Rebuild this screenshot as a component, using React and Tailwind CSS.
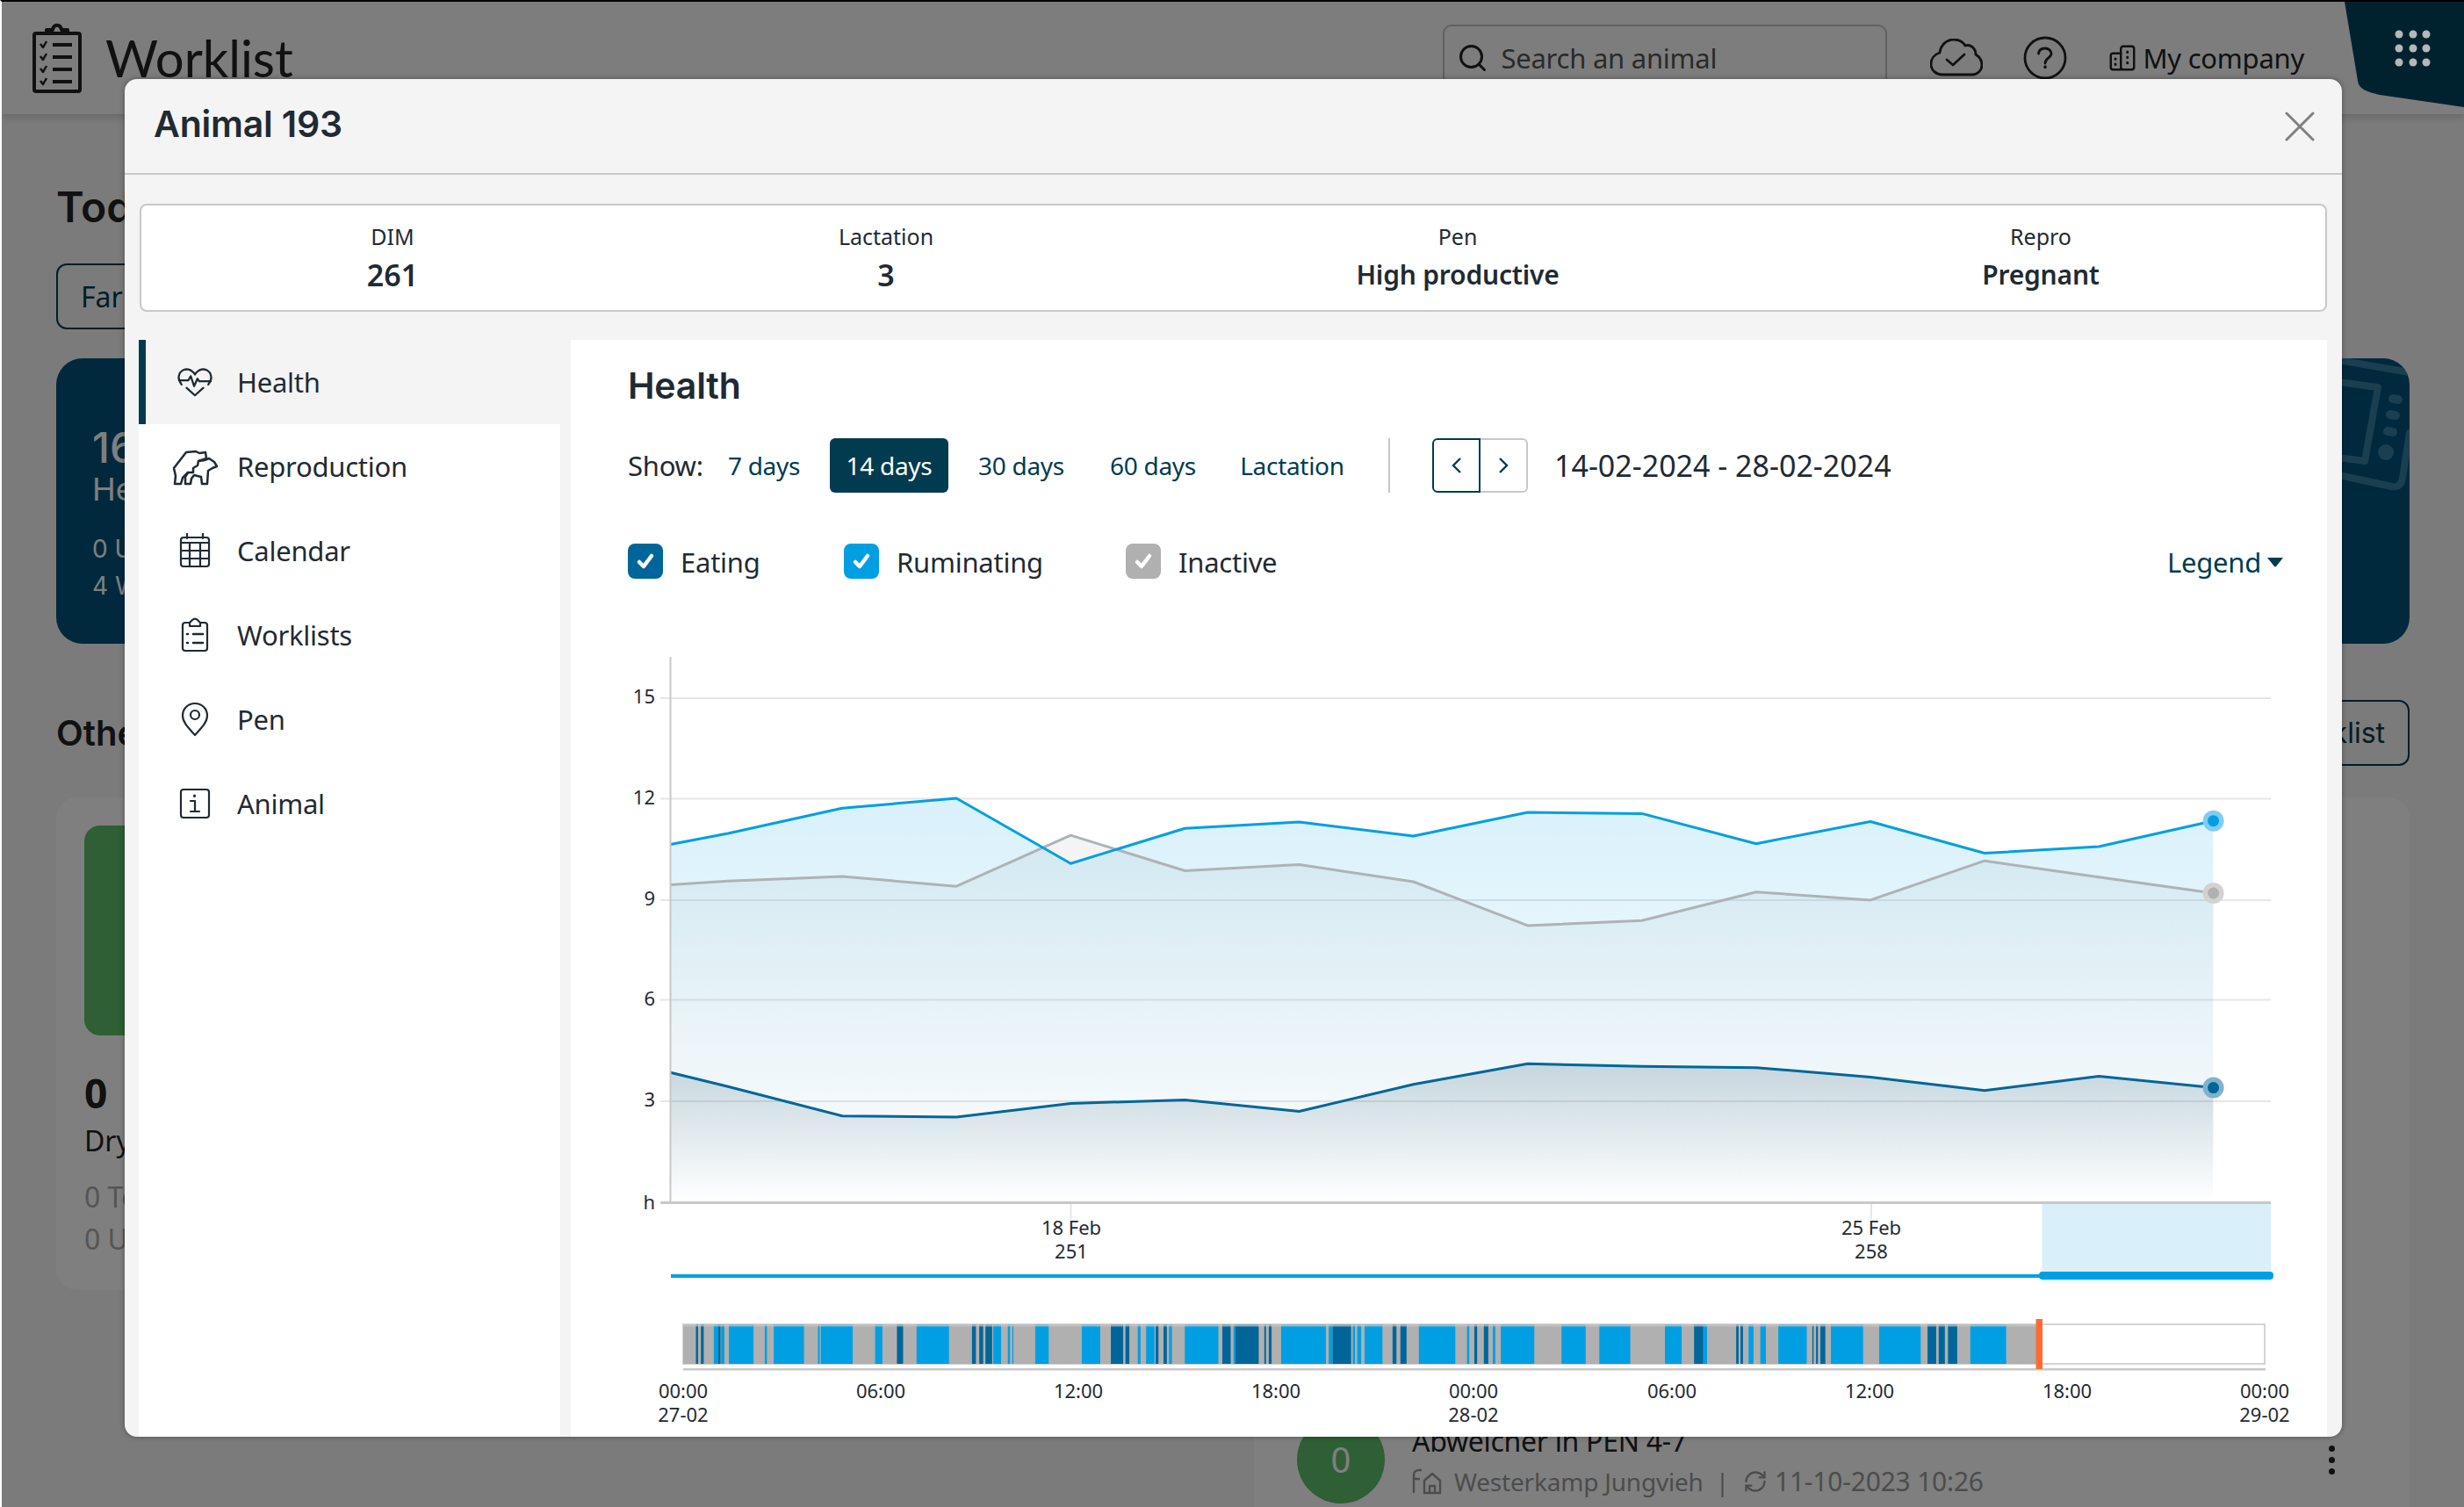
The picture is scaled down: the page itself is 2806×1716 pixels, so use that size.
import React from 'react';
import { Search, RefreshCw } from 'lucide-react';

const startX = 763.5;
const firstX = 829;
const stepX = 130.1;
const baseY = 1369;

const series = [
    {
        id: 'inactive',
        color: '#adb3b6',
        halo: '#d2d2d2',
        dot: '#b0b0b0',
        ys: [1007.5, 1003.2, 998, 1009.2, 951.1, 991.5, 984.5, 1004, 1053.9, 1048.3, 1015.7, 1024.9, 980.2, 998.8, 1017],
    },
    {
        id: 'ruminating',
        color: '#009fe3',
        halo: '#7fcdf1',
        dot: '#009fe3',
        ys: [961.5, 949, 920.3, 909, 983.2, 943.3, 936, 952, 925, 926.4, 960.7, 935.5, 971.5, 964, 934.7],
    },
    {
        id: 'eating',
        color: '#006699',
        halo: '#7fb2cc',
        dot: '#006699',
        ys: [1221.3, 1237.3, 1270.7, 1272, 1256.4, 1252.5, 1265.5, 1234.7, 1211.3, 1214.3, 1215.7, 1226.5, 1241.7, 1225.6, 1238.6],
    },
];

const pointsOf = (ys) =>
    ys.map((y, i) => [i === 0 ? startX : firstX + stepX * (i - 1), y]);

const linePath = (ys) =>
    pointsOf(ys)
        .map(([x, y], i) => `${i === 0 ? 'M' : 'L'}${x} ${y}`)
        .join(' ');

const areaPath = (ys) => {
    const pts = pointsOf(ys);
    return `${linePath(ys)} L${pts[pts.length - 1][0]} ${baseY} L${startX} ${baseY} Z`;
};

const gridLines = [
    { y: 795, label: '15' },
    { y: 909.5, label: '12' },
    { y: 1025, label: '9' },
    { y: 1138.5, label: '6' },
    { y: 1254, label: '3' },
];

const timeLabels = [
    { x: 778, top: '00:00', bottom: '27-02' },
    { x: 1003, top: '06:00' },
    { x: 1228, top: '12:00' },
    { x: 1453, top: '18:00' },
    { x: 1678, top: '00:00', bottom: '28-02' },
    { x: 1904, top: '06:00' },
    { x: 2129, top: '12:00' },
    { x: 2354, top: '18:00' },
    { x: 2579, top: '00:00', bottom: '29-02' },
];

// activity blocks, measured left part / right part of the bar
const leftBlocks = [
    [145, 149, 'd'], [154, 159, 'd'], [177, 185, 'l'], [185, 189, 'd'], [190, 196, 'l'], [204, 248, 'l'],
    [268, 272, 'l'], [284, 338, 'l'], [363, 366, 'l'], [368, 425, 'l'], [465, 478, 'l'], [504, 515, 'd'],
    [539, 597, 'l'], [638, 645, 'd'], [651, 658, 'd'], [662, 674, 'd'], [676, 690, 'l'], [702, 706, 'l'],
    [710, 712, 'l'], [751, 775, 'l'], [834, 867, 'l'], [886, 908, 'd'], [912, 919, 'd'], [934, 939, 'l'],
    [949, 964, 'l'], [966, 971, 'd'], [980, 986, 'd'], [990, 995, 'l'], [1018, 1078, 'l'], [1085, 1100, 'd'],
    [1105, 1108, 'l'], [1108, 1150, 'd'], [1160, 1163, 'd'], [1168, 1173, 'd'], [1190, 1270, 'l'], [1275, 1282, 'l'],
    [1282, 1315, 'd'], [1318, 1322, 'l'], [1326, 1333, 'l'], [1339, 1371, 'l'], [1389, 1396, 'd'], [1403, 1414, 'd'],
    [1436, 1501, 'l'], [1522, 1526, 'l'], [1535, 1540, 'd'], [1552, 1560, 'd'],
];
const rightBlocks = [
    [0, 4, 'l'], [13, 67, 'l'], [111, 150, 'l'], [172, 222, 'l'], [278, 305, 'l'], [325, 340, 'd'], [340, 346, 'l'],
    [393, 397, 'd'], [400, 404, 'd'], [413, 421, 'l'], [432, 441, 'l'], [461, 507, 'l'], [516, 518, 'd'],
    [522, 525, 'd'], [529, 537, 'd'], [546, 598, 'l'], [624, 691, 'l'], [702, 716, 'd'], [720, 730, 'd'],
    [735, 750, 'd'], [771, 829, 'l'],
];
const blocks = [
    ...leftBlocks.map(([a, b, t]) => [700 + a / 1.568, 700 + b / 1.568, t]),
    ...rightBlocks.map(([a, b, t]) => [1700 + a / 1.418, 1700 + b / 1.418, t]),
];

const HealthIcon = () => (
    <svg width="42" height="36" viewBox="0 0 42 36" fill="none" stroke="#1f2a33" strokeWidth="2.4" strokeLinejoin="round" strokeLinecap="round">
        <path d="M5 21C2 17 1 13 2 10C3 5 8 2 13 3C17 4 19 6 21 9C23 6 25 4 29 3C34 2 39 5 40 10C41 13 40 17 37 21" />
        <path d="M2 16H13L16 11L20 23L24 14L26 17H40" />
        <path d="M11 25L21 34L31 25" />
    </svg>
);

const ReproIcon = () => (
    <svg className="shrink-0" width="70" height="60" viewBox="-3 0 70 60" fill="none" stroke="#1f2a33" strokeWidth="2.5" strokeLinejoin="round" strokeLinecap="round">
        <path d="M9 50H16L18 43L24 37H30V32L35 29L36 24L45 21L44 14L37 15L33 13L22 14L8 32L10 41Z" />
        <path d="M36 24L43 23L48 21L54 25L57 30L52 32L47 35L46 50H40L39 42L31 40L28 44L27 50H21V42L24 37" />
    </svg>
);

const CalendarIcon = () => (
    <svg width="36" height="40" viewBox="0 0 36 40" fill="none" stroke="#1f2a33" strokeWidth="2.2" strokeLinejoin="round" strokeLinecap="round">
        <rect x="2" y="5" width="32" height="33" rx="3" />
        <path d="M9 1V6M27 1V6M2 11H34M2 20H34M2 29H34M12 11V38M24 11V38" />
    </svg>
);

const ListIcon = () => (
    <svg width="32" height="40" viewBox="0 0 32 40" fill="none" stroke="#1f2a33" strokeWidth="2.2" strokeLinejoin="round" strokeLinecap="round">
        <path d="M10 6H5C3 6 2 7 2 9V35C2 37 3 38 5 38H27C29 38 30 37 30 35V9C30 7 29 6 27 6H22L19 3C17 1 15 1 13 3L10 6V10H22V6" />
        <path d="M7 19H8M14 19H25M7 29H8M14 29H25" strokeWidth="2.6" />
    </svg>
);

const PinIcon = () => (
    <svg width="32" height="40" viewBox="0 0 32 40" fill="none" stroke="#1f2a33" strokeWidth="2.2" strokeLinejoin="round">
        <path d="M16 38C10 31 2 24 2 16C2 8 8 2 16 2C24 2 30 8 30 16C30 24 22 31 16 38Z" />
        <circle cx="16" cy="15" r="5" />
    </svg>
);

const InfoIcon = () => (
    <svg width="36" height="36" viewBox="0 0 36 36" fill="none" stroke="#1f2a33" strokeWidth="2.2" strokeLinejoin="round" strokeLinecap="round">
        <rect x="2" y="2" width="32" height="32" rx="3" />
        <path d="M13 15H18V27M13 27H23" />
        <path d="M17.5 9V9.5" strokeWidth="3" />
    </svg>
);

const CheckBox = ({ color, label, className }) => (
    <div className={`flex items-center gap-[20px] ${className}`}>
        <div className={`flex h-[40px] w-[40px] items-center justify-center rounded-[8px] ${color}`}>
            <svg width="24" height="24" viewBox="0 0 24 24" fill="none" stroke="white" strokeWidth="4.5" strokeLinecap="round" strokeLinejoin="round">
                <path d="M5 13L10 18L19 6" />
            </svg>
        </div>
        <span className="pt-[2px] text-[31px] tracking-[-0.25px] text-[#1f2a33]">{label}</span>
    </div>
);

const menu = [
    { label: 'Health', icon: <HealthIcon />, active: true },
    { label: 'Reproduction', icon: <ReproIcon /> },
    { label: 'Calendar', icon: <CalendarIcon /> },
    { label: 'Worklists', icon: <ListIcon /> },
    { label: 'Pen', icon: <PinIcon /> },
    { label: 'Animal', icon: <InfoIcon /> },
];

const infoCols = [
    { label: 'DIM', value: '261', size: 'text-[34px]' },
    { label: 'Lactation', value: '3', size: 'text-[34px]' },
    { label: 'Pen', value: 'High productive', size: 'text-[30px] tracking-[-0.2px]' },
    { label: 'Repro', value: 'Pregnant', size: 'text-[30px] tracking-[-0.2px]' },
];

const ranges = [
    { label: '7 days', width: 'w-[118px]' },
    { label: '14 days', width: 'w-[135px]' },
    { label: '30 days', width: 'w-[134px]' },
    { label: '60 days', width: 'w-[134px]' },
    { label: 'Lactation', width: 'w-[151px]' },
];

const Chart = () => (
    <svg width="2000" height="896" viewBox="650 740 2000 896" className="block">
        <defs>
            <linearGradient id="fill-inactive" x1="0" y1="0" x2="0" y2="1">
                <stop offset="0" stopColor="#b0b0b0" stopOpacity="0.14" />
                <stop offset="1" stopColor="#b0b0b0" stopOpacity="0" />
            </linearGradient>
            <linearGradient id="fill-ruminating" x1="0" y1="0" x2="0" y2="1">
                <stop offset="0" stopColor="#009fe3" stopOpacity="0.15" />
                <stop offset="1" stopColor="#009fe3" stopOpacity="0" />
            </linearGradient>
            <linearGradient id="fill-eating" x1="0" y1="0" x2="0" y2="1">
                <stop offset="0" stopColor="#003b50" stopOpacity="0.17" />
                <stop offset="1" stopColor="#003b50" stopOpacity="0" />
            </linearGradient>
        </defs>

        {gridLines.map((g) => (
            <g key={g.label}>
                <line x1="752" x2="2586" y1={g.y} y2={g.y} stroke="#e6e6e6" strokeWidth="2" />
                <text x="746" y={g.y + 6} textAnchor="end" fontSize="22" fill="#1f2a33">{g.label}</text>
            </g>
        ))}
        <text x="746" y="1377" textAnchor="end" fontSize="22" fill="#1f2a33">h</text>

        {series.map((s) => (
            <path key={s.id} d={areaPath(s.ys)} fill={`url(#fill-${s.id})`} />
        ))}
        {series.map((s) => (
            <path key={s.id} d={linePath(s.ys)} fill="none" stroke={s.color} strokeWidth="3" strokeLinejoin="round" />
        ))}
        {series.map((s) => (
            <g key={s.id}>
                <circle cx="2520.6" cy={s.ys[14]} r="12" fill={s.halo} />
                <circle cx="2520.6" cy={s.ys[14]} r="6.5" fill={s.dot} />
            </g>
        ))}

        <line x1="763.5" x2="763.5" y1="748" y2="1370" stroke="#c8c8c8" strokeWidth="2" />
        <line x1="752" x2="2586" y1="1369.5" y2="1369.5" stroke="#c8c8c8" strokeWidth="3" />

        <line x1="1219.5" x2="1219.5" y1="1371" y2="1388" stroke="#e6e6e6" strokeWidth="2" />
        <line x1="2131" x2="2131" y1="1371" y2="1388" stroke="#e6e6e6" strokeWidth="2" />
        <text x="1220" y="1406" textAnchor="middle" fontSize="22" fill="#1f2a33">18 Feb</text>
        <text x="1220" y="1433" textAnchor="middle" fontSize="22" fill="#1f2a33">251</text>
        <text x="2131" y="1406" textAnchor="middle" fontSize="22" fill="#1f2a33">25 Feb</text>
        <text x="2131" y="1433" textAnchor="middle" fontSize="22" fill="#1f2a33">258</text>

        {/* navigator */}
        <rect x="2325.5" y="1371" width="260.5" height="78" fill="#d9eff9" />
        <rect x="764" y="1451" width="1562" height="4" fill="#009fe3" />
        <rect x="2325.5" y="1447" width="260.5" height="12" fill="#d9eff9" />
        <rect x="2322" y="1448" width="267" height="9" rx="4" fill="#009fe3" />

        {/* activity bar */}
        <rect x="778" y="1508" width="1801" height="45" fill="#ffffff" stroke="#d4d4d4" strokeWidth="2" />
        <rect x="778" y="1508" width="1541" height="45" fill="#b0b0b0" />
        {blocks.map(([a, b, t], i) => (
            <rect key={i} x={a} y="1508" width={b - a} height="45" fill={t === 'l' ? '#009fe3' : '#006699'} />
        ))}
        <rect x="778" y="1508" width="1541" height="2.5" fill="#c8c8c8" opacity="0.7" />
        <rect x="778" y="1558" width="1802" height="2.5" fill="#c8c8c8" />
        <rect x="2318.5" y="1502" width="7.5" height="57" fill="#ff6b35" />

        {timeLabels.map((t) => (
            <g key={t.x}>
                <text x={t.x} y="1592" textAnchor="middle" fontSize="22" fill="#1f2a33">{t.top}</text>
                {t.bottom && <text x={t.x} y="1619" textAnchor="middle" fontSize="22" fill="#1f2a33">{t.bottom}</text>}
            </g>
        ))}
    </svg>
);

const AnimalModal = () => (
    <div className="absolute left-[140px] top-[88px] z-10 flex h-[1546px] w-[2525px] flex-col overflow-hidden rounded-[14px] bg-[#f4f4f4] shadow-[0_0_6px_rgba(0,0,0,0.35)]">
        <div className="flex h-[109px] shrink-0 items-center justify-between border-b-2 border-[#c8c8c8] pl-[33px] pr-[31px]">
            <h1 className="-mt-[4px] font-['Inter',sans-serif] text-[41px] font-semibold tracking-[-0.2px] text-[#1f2a33]">Animal 193</h1>
            <svg width="34" height="34" viewBox="0 0 34 34" stroke="#808080" strokeWidth="3" strokeLinecap="round">
                <path d="M2 2L32 32M32 2L2 32" />
            </svg>
        </div>

        <div className="mx-[17px] mt-[33px] grid h-[123px] shrink-0 grid-cols-[572px_552px_750px_578px] rounded-[8px] border-2 border-[#c8c8c8] bg-white">
            {infoCols.map((col) => (
                <div key={col.label} className="flex flex-col items-center pt-[18px]">
                    <span className="text-[25px] leading-[34px] text-[#1f2a33]">{col.label}</span>
                    <span className={`mt-[6px] font-semibold leading-[42px] text-[#1f2a33] ${col.size}`}>{col.value}</span>
                </div>
            ))}
        </div>

        <div className="mt-[32px] flex min-h-0 flex-1">
            <nav className="ml-[16px] w-[480px] shrink-0 bg-white">
                {menu.map((item) => (
                    <div
                        key={item.label}
                        className={`flex h-[96px] items-center gap-[28px] ${item.active ? 'border-l-8 border-[#003b50] bg-[#f4f4f4] pl-[36px]' : 'pl-[44px]'}`}
                    >
                        <div className="flex w-[40px] justify-center">{item.icon}</div>
                        <span className="text-[31px] tracking-[-0.25px] text-[#1f2a33]">{item.label}</span>
                    </div>
                ))}
            </nav>

            <section className="ml-[12px] w-[2000px] shrink-0 bg-white">
                <div className="pl-[65px] pr-[49px] pt-[30px]">
                    <h2 className="font-['Inter',sans-serif] text-[41px] font-semibold leading-[44px] tracking-[-0.2px] text-[#1f2a33]">Health</h2>

                    <div className="mt-[38px] flex h-[62px] items-center">
                        <span className="w-[96px] text-[31px] tracking-[-0.25px] text-[#1f2a33]">Show:</span>
                        <div className="flex gap-[16px]">
                            {ranges.map((r) => (
                                <button
                                    key={r.label}
                                    className={`h-[62px] rounded-[6px] text-[28px] tracking-[-0.3px] ${r.width} ${r.label === '14 days' ? 'bg-[#003b50] text-white' : 'text-[#003b50]'}`}
                                >
                                    {r.label}
                                </button>
                            ))}
                        </div>
                        <div className="ml-[34px] h-[62px] w-[2px] bg-[#c8c8c8]" />
                        <div className="ml-[48px] flex h-[62px]">
                            <div className="flex w-[55px] items-center justify-center rounded-l-[6px] border-2 border-[#003b50]">
                                <svg width="20" height="24" viewBox="0 0 20 24" fill="none" stroke="#003b50" strokeWidth="2.4"><path d="M14 4L6 12L14 20" /></svg>
                            </div>
                            <div className="flex w-[54px] items-center justify-center rounded-r-[6px] border-2 border-l-0 border-[#c8c8c8]">
                                <svg width="20" height="24" viewBox="0 0 20 24" fill="none" stroke="#003b50" strokeWidth="2.4"><path d="M6 4L14 12L6 20" /></svg>
                            </div>
                        </div>
                        <span className="ml-[30px] text-[34px] text-[#1f2a33]">14-02-2024 - 28-02-2024</span>
                    </div>

                    <div className="mt-[58px] flex h-[40px] items-center">
                        <CheckBox color="bg-[#006699]" label="Eating" className="w-[246px]" />
                        <CheckBox color="bg-[#009fe3]" label="Ruminating" className="w-[321px]" />
                        <CheckBox color="bg-[#b0b0b0]" label="Inactive" />
                        <div className="ml-auto flex items-center gap-[6px] pt-[2px] text-[31px] tracking-[-0.25px] text-[#003b50]">
                            Legend
                            <svg width="20" height="12" viewBox="0 0 20 12" fill="#003b50"><path d="M1 1H19L11 11C10.5 11.5 9.5 11.5 9 11Z" /></svg>
                        </div>
                    </div>
                </div>
                <div className="mt-[81px]">
                    <Chart />
                </div>
            </section>
        </div>
    </div>
);

const Header = () => (
    <header className="flex h-[128px] items-center bg-[#fafafa] pl-[34px] pr-[182px] shadow-[0_2px_10px_rgba(0,0,0,0.2)]">
        <svg width="58" height="80" viewBox="0 0 58 80" fill="none" stroke="#222" strokeWidth="4" strokeLinejoin="round">
            <rect x="3" y="12" width="52" height="66" rx="2" />
            <path d="M17 12V8H24C25 1 33 1 34 8H41V12Z" />
            <path d="M10 24L13 28L17 21M10 38L13 42L17 35M10 52L13 56L17 49M10 66L13 70L17 63" strokeWidth="2.5" />
            <path d="M24 25H46M24 39H46M24 53H46M24 67H46" strokeWidth="4" />
        </svg>
        <span className="ml-[26px] font-['Lato',sans-serif] text-[58px] leading-none text-[#222]">Worklist</span>

        <div className="ml-auto flex h-[76px] w-[506px] items-center rounded-[10px] border-2 border-[#c0c0c0] pl-[14px] text-[#555]">
            <Search size={36} color="#222" strokeWidth={2} />
            <span className="ml-[14px] text-[31px] tracking-[-0.25px]">Search an animal</span>
        </div>
        <svg className="ml-[49px]" width="60" height="44" viewBox="0 0 60 44" fill="none" stroke="#222" strokeWidth="2.8" strokeLinejoin="round" strokeLinecap="round">
            <path d="M14 41H48C54 41 59 36 59 30C59 24 55 20 52 18C52 11 46 6 40 8C37 3 32 1 27 1C19 1 12 7 11 16C5 18 1 23 1 29C1 36 7 41 14 41Z" />
            <path d="M19 24L26 30L39 18" />
        </svg>
        <svg className="ml-[46px]" width="50" height="50" viewBox="0 0 50 50" fill="none" stroke="#222" strokeWidth="2.8" strokeLinecap="round">
            <circle cx="25" cy="25" r="23" />
            <path d="M17.5 20C18 16 21 14 25 14C29 14 32 17 32 20C32 25 25 25 25 31" />
            <path d="M25 35V35.5" strokeWidth="3.5" />
        </svg>
        <div className="ml-[48px] flex items-center gap-[8px] text-[31px] tracking-[-0.25px] text-[#222]">
            <svg width="30" height="30" viewBox="0 0 34 34" fill="none" stroke="#222" strokeWidth="2.8" strokeLinejoin="round" strokeLinecap="round">
                <rect x="15" y="2" width="17" height="30" rx="3" />
                <path d="M15 11H5C3 11 2 12 2 14V29C2 31 3 32 5 32H15" />
                <path d="M23.5 9V9.5M23.5 16V16.5M23.5 23V23.5M8 18V18.5M8 25V25.5" strokeWidth="3.4" />
            </svg>
            My company
        </div>
    </header>
);

const AppBadge = () => (
    <div className="absolute right-0 top-0 z-20">
        <svg width="136" height="120" viewBox="0 0 136 120" fill="#00222f">
            <path d="M0 0H136V120L40 106C28 103 16 100 15 90Z" />
            {[37, 53, 69].map((y) =>
                [62, 78, 93].map((x) => <circle key={`${x}-${y}`} cx={x} cy={y} r="4.5" fill="#b4b8ba" />)
            )}
        </svg>
    </div>
);

const App = () => {
    return (
        <div className="relative h-[1716px] w-[2806px] overflow-hidden border-l-2 border-t-2 border-l-white border-t-black bg-[#f6f6f6] font-['Noto_Sans',sans-serif]">
            <Header />

            <main className="pl-[62px]">
                <h2 className="mt-[82px] font-['Inter',sans-serif] text-[48px] font-semibold leading-[48px] text-[#222]">Today's tasks</h2>
                <button className="mt-[40px] flex h-[75px] w-[260px] items-center rounded-[12px] border-2 border-[#003b50] px-[26px] text-[32px] text-[#003b50]">
                    Farm
                </button>

                <div className="mt-[33px] grid grid-cols-[1348px_1316px] gap-x-[16px]">
                    <div className="h-[325px] rounded-[30px] bg-[#00527a] pl-[41px] pt-[80px] text-white">
                        <p className="font-['Inter',sans-serif] text-[48px] font-medium leading-[44px]">16</p>
                        <p className="font-['Inter',sans-serif] text-[36px] leading-[50px]">Health</p>
                        <p className="mt-[22px] font-['Inter',sans-serif] text-[28px] leading-[42px]">0 Urgent</p>
                        <p className="font-['Inter',sans-serif] text-[28px] leading-[42px]">4 Warning</p>
                    </div>
                    <div className="flex h-[325px] justify-end overflow-hidden rounded-[30px] bg-[#00527a]">
                        <svg width="100" height="160" viewBox="0 0 100 160" fill="none" stroke="#347ea0" strokeWidth="8" strokeLinejoin="round" strokeLinecap="round">
                            <path d="M-4 -2L100 16" />
                            <path d="M-4 128L80 146C88 147 91 143 92 136L100 85" />
                            <path d="M-4 24L64 33L49 117L-4 110" />
                            <path d="M81 46L87 47M78 64L84 65M75 83L81 84" strokeWidth="10" />
                            <circle cx="73" cy="107" r="5" fill="#347ea0" />
                        </svg>
                    </div>
                </div>

                <div className="mt-[64px] flex h-[75px] w-[2680px] items-center justify-between">
                    <h2 className="font-['Inter',sans-serif] text-[40px] font-semibold text-[#222]">Other</h2>
                    <button className="h-[75px] rounded-[12px] border-2 border-[#003b50] px-[26px] font-['Inter',sans-serif] text-[32px] text-[#003b50]">
                        Worklist
                    </button>
                </div>

                <div className="mt-[36px] grid grid-cols-[1348px_1316px] items-start gap-x-[16px]">
                    <div className="h-[561px] rounded-[24px] bg-white p-[32px]">
                        <div className="h-[239px] w-[300px] rounded-[18px] bg-[#5ebe6a]" />
                        <p className="mt-[40px] text-[46px] font-bold leading-[50px] text-[#222]">0</p>
                        <p className="mt-[8px] text-[32px] leading-[44px] text-[#222]">Dry</p>
                        <p className="mt-[18px] text-[32px] leading-[48px] text-[#aaa]">0 Total</p>
                        <p className="text-[32px] leading-[48px] text-[#aaa]">0 Urgent</p>
                    </div>
                    <div className="flex h-[830px] items-end rounded-[24px] bg-white pb-[26px] pl-[49px] pr-[85px]">
                        <div className="flex h-[100px] w-full items-center">
                            <div className="flex h-[100px] w-[100px] items-center justify-center rounded-full bg-[#5ebe6a] text-[40px] text-white">0</div>
                            <div className="ml-[31px]">
                                <p className="pt-[4px] text-[32px] leading-[40px] tracking-[-0.3px] text-[#222]">Abweicher in PEN 4-7</p>
                                <p className="mt-[6px] flex items-center text-[28px] leading-[40px] tracking-[-0.2px] text-[#999]">
                                    <svg width="34" height="30" viewBox="0 0 34 30" fill="none" stroke="#999" strokeWidth="2.4" strokeLinejoin="round">
                                        <path d="M2 28V8C2 4 4 2 8 2H11M2 12H9M14 28V14L23 6L32 14V28ZM20 28V20H26V28" />
                                    </svg>
                                    <span className="ml-[14px]">Westerkamp Jungvieh</span>
                                    <span className="ml-[14px]">|</span>
                                    <RefreshCw className="ml-[16px]" size={28} color="#999" strokeWidth={2} />
                                    <span className="ml-[8px] text-[30px]">11-10-2023 10:26</span>
                                </p>
                            </div>
                            <div className="ml-auto flex flex-col gap-[6px]">
                                <div className="h-[7px] w-[7px] rounded-full bg-[#222]" />
                                <div className="h-[7px] w-[7px] rounded-full bg-[#222]" />
                                <div className="h-[7px] w-[7px] rounded-full bg-[#222]" />
                            </div>
                        </div>
                    </div>
                </div>
            </main>

            <div className="absolute inset-0 z-[5] bg-black/50" />
            <AppBadge />
            <AnimalModal />
        </div>
    );
};

export default App;
